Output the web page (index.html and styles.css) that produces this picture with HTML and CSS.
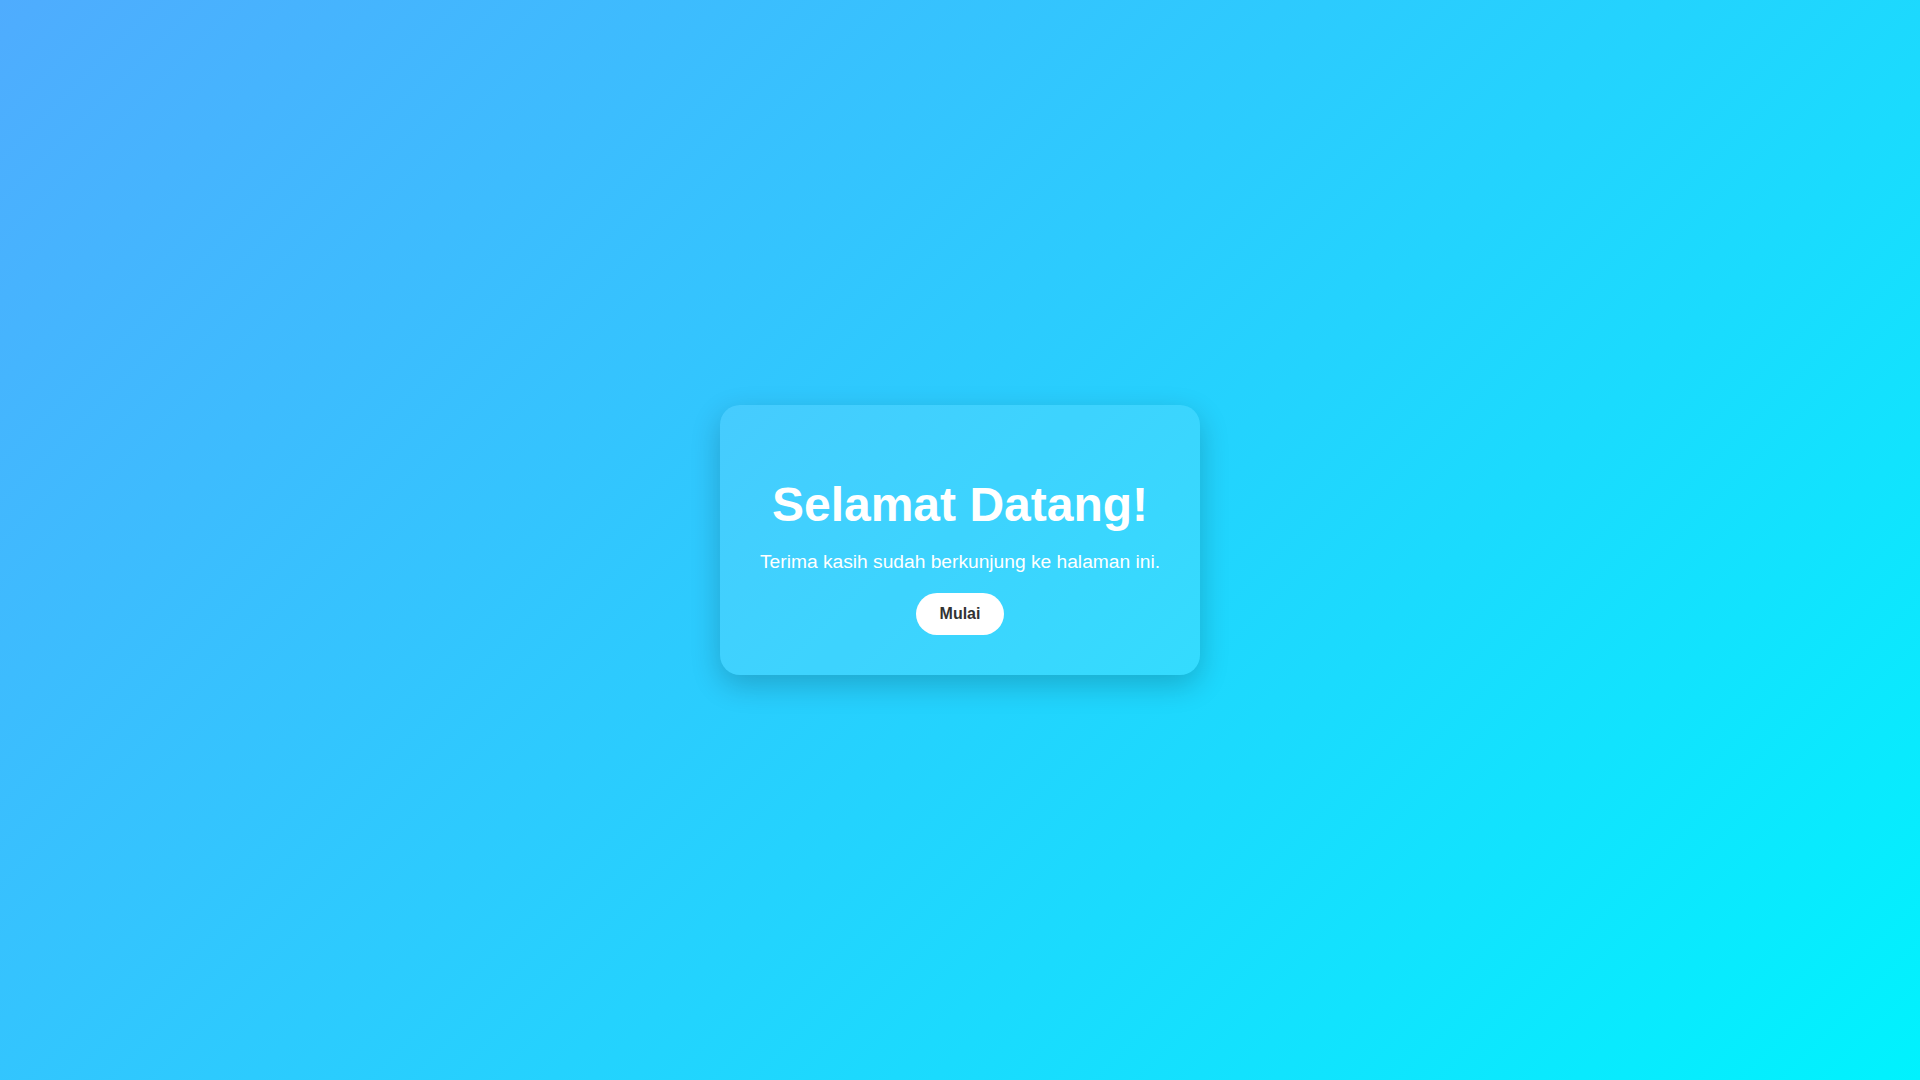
FILE: index.html
```html
<!DOCTYPE html>
<html lang="id">
<head>
<meta charset="utf-8">
<title>Selamat Datang</title>
<link rel="stylesheet" href="styles.css">
</head>
<body>
  <main class="card">
    <h1 class="title">Selamat Datang!</h1>
    <p class="subtitle">Terima kasih sudah berkunjung ke halaman ini.</p>
    <button class="btn" type="button">Mulai</button>
  </main>
</body>
</html>
```

FILE: styles.css
```css
html, body {
  margin: 0;
  height: 100%;
}
body {
  font-family: "Liberation Sans", Arial, sans-serif;
  background: linear-gradient(135deg, #4facfe 0%, #00f2fe 100%);
  display: flex;
  align-items: center;
  justify-content: center;
  min-height: 100vh;
}
.card {
  box-sizing: border-box;
  width: 480px;
  padding: 72px 40px 40px;
  border-radius: 20px;
  background: rgba(255, 255, 255, 0.1);
  box-shadow: 0 10px 30px rgba(0, 0, 0, 0.2);
  text-align: center;
  color: #fff;
}
.title {
  margin: 0 0 19px;
  font-size: 48px;
  font-weight: bold;
  line-height: normal;
}
.subtitle {
  margin: 0 0 20px;
  font-size: 19.2px;
  line-height: normal;
}
.btn {
  font-family: "Liberation Sans", Arial, sans-serif;
  font-size: 16px;
  font-weight: bold;
  color: #333;
  background: #fff;
  border: none;
  border-radius: 25px;
  padding: 12px 24px;
  line-height: normal;
  cursor: pointer;
}
```
